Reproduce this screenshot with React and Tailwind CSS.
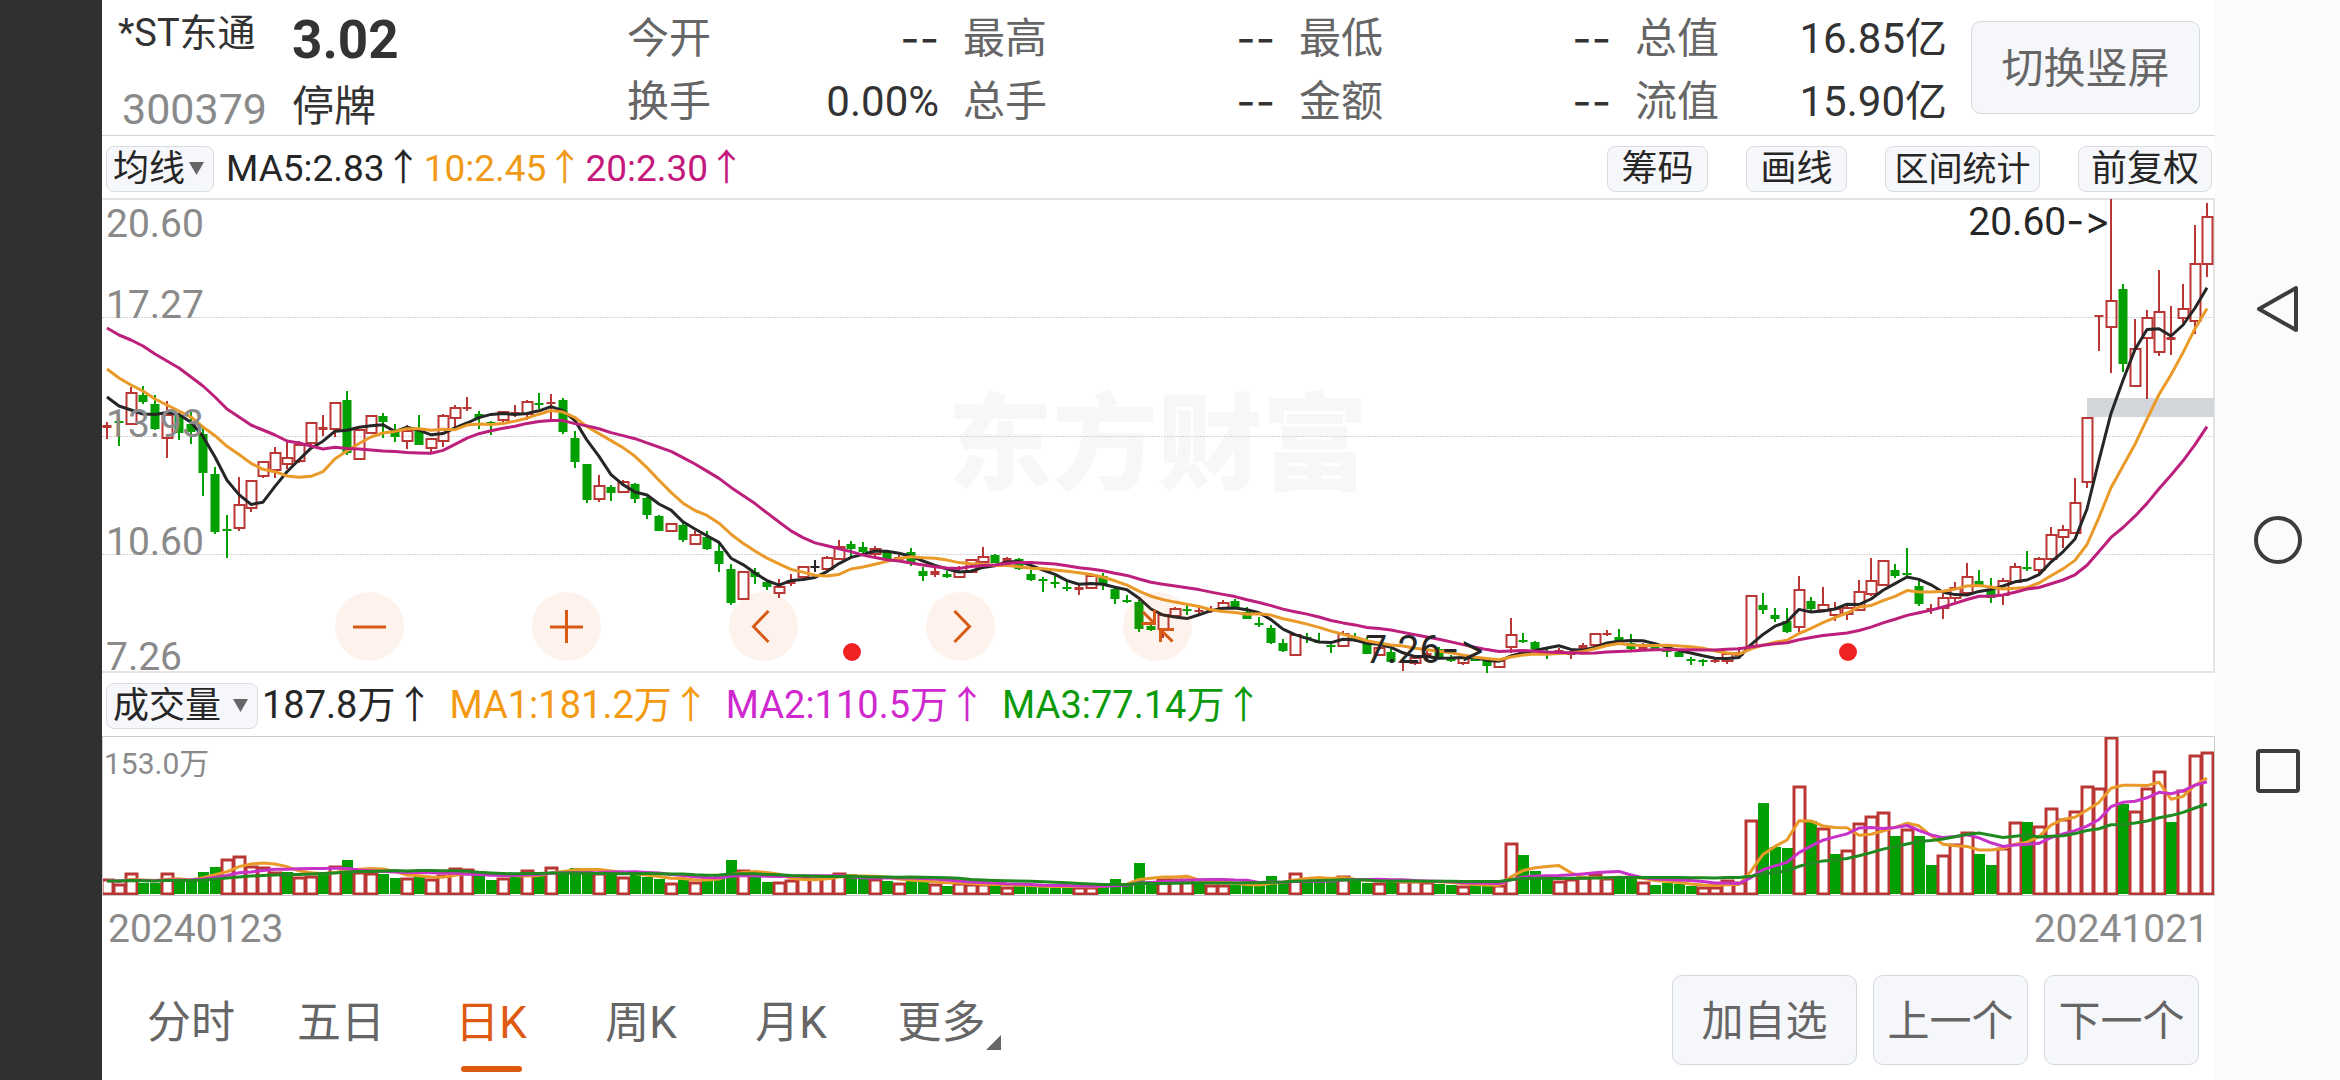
import { useState } from 'react'

const STEP = 12
const FIRST_X = 107

// colour, high, body top, body bottom, low (chart units)
const CANDLES = `
r 422 425 428 439|g 417 421 423 446|r 387 393 424 425|g 386 395 402 404|g 395 404 429 430|r 401 415 438 458
g 413 415 433 440|g 412 424 432 444|g 427 434 473 496|g 467 474 532 534|g 515 529 531 558|r 477 505 528 531
r 481 481 508 512|r 462 462 476 478|r 447 453 470 478|r 441 458 464 469|r 441 445 461 463|r 423 423 443 445
r 415 427 430 436|r 403 403 429 437|g 391 400 453 455|r 430 430 459 460|r 416 416 433 434|g 413 416 422 438
g 424 431 437 442|r 425 431 441 449|g 415 428 445 445|r 438 439 448 452|r 414 416 441 447|r 405 408 418 427
r 397 407 409 411|g 411 414 418 429|g 421 422 423 435|r 412 412 420 424|r 405 412 414 417|r 400 402 414 420
g 393 403 405 409|r 394 402 404 419|g 398 400 432 434|g 431 438 462 468|g 464 464 500 503|r 475 486 499 502
g 485 487 493 501|r 480 482 492 493|g 483 484 499 503|g 497 498 515 519|g 515 516 531 531|r 523 524 531 532
g 523 525 540 542|r 531 535 544 545|g 531 537 549 550|g 543 551 564 572|g 564 569 603 605|r 572 572 599 600
g 568 572 577 584|g 580 582 587 590|r 579 587 593 598|r 574 580 584 586|r 567 567 577 579|k 560 566 567 572
r 556 558 569 571|r 540 547 559 560|g 541 544 549 558|g 542 547 552 553|r 546 549 554 557|g 552 552 559 559
r 555 557 560 561|g 548 552 564 566|g 567 571 576 581|r 567 571 575 577|g 571 574 577 578|r 566 572 577 578
r 560 560 572 573|r 547 557 562 563|g 554 555 563 563|r 557 558 562 563|g 558 559 569 570|g 570 574 580 581
g 577 579 581 592|g 576 582 584 588|g 581 587 589 591|r 585 587 590 595|r 575 576 588 589|g 573 576 585 590
g 588 589 599 604|g 595 600 602 603|g 600 602 629 632|g 623 626 630 631|r 615 615 629 638|r 607 609 616 617
g 605 609 610 615|r 607 610 612 615|r 606 609 611 613|r 600 603 608 609|g 599 601 608 609|g 607 612 619 619
g 617 623 625 627|g 625 628 643 644|g 639 643 651 652|r 635 635 655 656|g 633 637 638 643|g 633 641 643 643
g 642 645 646 653|r 631 634 646 647|g 633 637 639 642|g 637 641 654 654|r 645 648 655 656|g 649 652 662 663
r 658 661 663 671|r 655 658 663 665|r 650 653 657 659|g 647 649 657 658|g 655 657 661 662|r 655 658 663 665
g 657 659 660 661|g 659 661 666 673|r 659 661 667 668|r 618 635 647 653|g 633 640 641 643|g 641 642 649 651
g 648 652 654 659|r 648 650 652 654|r 650 653 655 659|r 643 645 649 651|r 633 634 645 647|r 630 633 635 636
g 629 637 641 643|g 634 643 649 650|r 643 647 648 650|g 645 647 648 649|g 647 650 652 657|g 651 652 657 657
g 657 659 661 665|g 659 660 661 666|r 657 660 661 663|r 652 654 661 664|r 647 652 656 658|r 595 596 646 650
g 593 605 610 614|g 608 615 619 622|g 608 621 632 633|r 576 590 627 632|g 597 601 609 613|r 587 605 610 612
r 602 609 615 621|r 604 608 614 620|r 580 592 610 611|r 558 581 594 596|r 561 561 585 585|g 564 570 576 578
g 548 573 575 577|g 581 586 604 606|r 604 608 610 614|r 594 598 608 619|r 582 588 598 602|r 563 577 593 594
g 570 581 586 587|g 578 590 598 603|r 578 581 595 605|r 563 567 582 583|g 551 567 568 571|r 557 559 570 574
r 527 535 559 560|r 525 530 537 548|r 478 503 533 533|r 417 418 482 488|r 315 315 316 351|r 199 301 327 373
g 284 289 364 372|r 319 349 386 387|r 310 318 338 399|r 270 312 352 356|r 306 337 340 355|r 284 309 318 323
r 225 264 321 334|r 203 217 264 277`
  .trim()
  .split(/[|\n]/)
  .map((row, i) => {
    const [color, ...v] = row.split(' ')
    const [high, top, bottom, low] = v.map(Number)
    return { x: FIRST_X + i * STEP, color, high, top, bottom, low }
  })

// top of each volume bar, r = up day, g = down day
const VOLUMES = `
r879 r884 r873 g883 g883 r873 g882 g879 g872 g867 r859 r856 r866 r867 r872 g872 r877 r876 g872 r866
g860 r872 r873 g874 g878 r878 g876 r879 r875 r868 r869 g875 g880 r878 g877 r870 g873 r867 g871 g868
g869 r873 g874 r877 g875 g877 g879 r883 g879 r882 g877 g874 g860 r870 g877 g882 r882 r880 r877 r878
r877 r873 g874 g878 r879 g881 r883 g880 g881 r884 g886 r883 r884 r884 g885 r887 g886 g886 g887 g887
g886 r887 r887 g885 g879 g883 g863 g881 r879 r879 r879 g882 r885 r885 g885 g885 g885 g876 g881 r873
g878 g880 g881 r876 g881 g883 r883 g881 r881 r881 r882 g884 g885 r886 g885 g885 r885 r843 g855 g871
g878 r881 r879 r877 r874 r878 g878 g879 r882 g885 g883 g884 g886 r887 r887 r880 r882 r820 g803 g847
g848 r786 g821 r828 g854 r850 r823 r816 r812 g836 r829 g836 g865 r855 r844 r832 g854 g865 r848 r822
g822 r826 r808 r819 r811 r786 r788 r737 g804 r811 r788 r771 g822 r790 r755 r752`
  .trim()
  .split(/\s+/)
  .map((s, i) => ({ x: FIRST_X + i * STEP, color: s[0], top: Number(s.slice(1)) }))

const INK = { r: '#b93634', g: '#02a002', k: '#262626' }

// closes before the first visible day are not loaded, so each average starts from known points
function average(values, size, head) {
  return values.map((_, i) => {
    if (i < head.length) return head[i]
    const part = values.slice(Math.max(0, i - size + 1), i + 1)
    return part.reduce((a, b) => a + b, 0) / part.length
  })
}

const toPoints = (ys) => ys.map((y, i) => `${FIRST_X + i * STEP},${y.toFixed(1)}`).join(' ')

const CLOSES = CANDLES.map((c) => (c.color === 'g' ? c.bottom : c.top))
const PRICE_LINES = [
  { color: '#262626', points: toPoints(average(CLOSES, 5, [397, 406, 410, 414])) },
  { color: '#ea9a28', points: toPoints(average(CLOSES, 10, [369, 378, 385, 391, 399, 405, 411, 417, 427])) },
  {
    color: '#bd1f7c',
    points: toPoints(
      average(CLOSES, 20, [328, 335, 340, 346, 354, 361, 368, 377, 386, 397, 409, 417, 425, 430, 435, 441, 443, 446, 449])
    ),
  },
]

const TOPS = VOLUMES.map((v) => v.top)
const volumeAverage = (size) => toPoints(average([...Array(20).fill(881), ...TOPS], size, []).slice(20))
const VOLUME_LINES = [
  { color: '#ea9a28', points: volumeAverage(5) },
  { color: '#c832c8', points: volumeAverage(10) },
  { color: '#1f8a1f', points: volumeAverage(20) },
]

const STATS = [
  ['今开', '--', '换手', '0.00%'],
  ['最高', '--', '总手', '--'],
  ['最低', '--', '金额', '--'],
  ['总值', '16.85亿', '流值', '15.90亿'],
]

const TABS = ['分时', '五日', '日K', '周K', '月K']

function Stat({ label, value }) {
  return (
    <div className="flex justify-between text-[42px] leading-[63px]">
      <dt className="text-[#666666]">{label}</dt>
      <dd className={value === '--' ? "font-['Inter'] text-[#333333]" : 'text-[#333333]'}>{value}</dd>
    </div>
  )
}

function Header() {
  return (
    <header className="flex h-[136px] border-b border-[#d4d4d4] pl-4 pr-[15px]">
      <div className="w-[174px] shrink-0 whitespace-nowrap">
        <h1 className="text-[38px] leading-[66px]">*ST东通</h1>
        <p className="pl-1 text-[43px] leading-[86px] text-[#8a8a8a]">300379</p>
      </div>
      <div className="w-[335px] shrink-0">
        <p className="text-[53px] font-bold leading-[80px]">3.02</p>
        <p className="text-[42px] leading-[54px]">停牌</p>
      </div>
      <dl className="grid flex-1 grid-cols-4 gap-x-6 pt-[7px]">
        {STATS.map(([a, av, b, bv]) => (
          <div key={a}>
            <Stat label={a} value={av} />
            <Stat label={b} value={bv} />
          </div>
        ))}
      </dl>
      <button className="ml-6 mt-[21px] h-[93px] w-[229px] shrink-0 rounded-[10px] border border-[#d3d8dc] bg-[#f6f7fa] pt-0.5 text-[42px] text-[#666666]">
        切换竖屏
      </button>
    </header>
  )
}

function Picker({ label, options, className }) {
  return (
    <div className={`relative shrink-0 ${className}`}>
      <select
        aria-label={label}
        className="h-[46px] w-full appearance-none rounded-lg border border-[#d9dde0] bg-[#f6f7fa] pl-1.5 text-[36px] leading-[44px] text-[#262626]"
      >
        {options.map((o) => (
          <option key={o}>{o}</option>
        ))}
      </select>
      <svg className="pointer-events-none absolute right-2.5 top-4 h-[13px] w-[15px]" viewBox="0 0 15 13">
        <path d="M0 0H15L7.5 13Z" fill="#666666" />
      </svg>
    </div>
  )
}

function ToolButton({ children, className }) {
  return (
    <button
      className={`h-[46px] shrink-0 whitespace-nowrap rounded-lg border border-[#d9dde0] bg-[#f6f7fa] leading-[44px] text-[#262626] ${className}`}
    >
      {children}
    </button>
  )
}

function PriceToolbar() {
  return (
    <div className="flex h-[62px] items-center pl-1 pr-[3px] pt-1">
      <Picker label="主图指标" options={['均线', 'BOLL']} className="w-[108px]" />
      <div className="ml-3 flex gap-0.5 whitespace-nowrap text-[37px]">
        <span className="text-[#262626]">MA5:2.83↑</span>
        <span className="text-[#f09a1a]">10:2.45↑</span>
        <span className="text-[#c4187c]">20:2.30↑</span>
      </div>
      <div className="ml-auto flex gap-[38px]">
        <ToolButton className="w-[101px] text-[36px]">筹码</ToolButton>
        <ToolButton className="w-[101px] text-[36px]">画线</ToolButton>
        <ToolButton className="w-[155px] text-[34px]">区间统计</ToolButton>
        <ToolButton className="w-[134px] text-[36px]">前复权</ToolButton>
      </div>
    </div>
  )
}

const CONTROLS = [
  { label: '缩小', d: 'M18 35H51', w: 3 },
  { label: '放大', d: 'M18 35H51M34.5 18V51', w: 3 },
  { label: '左移', d: 'M39.5 19L24.5 34.5L39.5 50', w: 3 },
  { label: '右移', d: 'M28.5 19L43.5 34.5L28.5 50', w: 3 },
  { label: '收起', d: 'M18.5 31.5H31.5V18M31.5 31.5L20 20M37.5 50V37.5H51M37.5 37.5L49.5 49.5', w: 3 },
]

function Candle({ x, color, high, top, bottom, low }) {
  const ink = INK[color]
  const height = Math.max(bottom - top, 2)
  return (
    <g stroke={ink} strokeWidth="2">
      <path d={`M${x} ${high}V${top}M${x} ${bottom}V${low}`} />
      {color === 'r' && height > 4 ? (
        <rect x={x - 4.5} y={top} width="10" height={height} fill="none" />
      ) : (
        <rect x={x - 4.5} y={top} width="9" height={height} fill={ink} stroke="none" />
      )}
    </g>
  )
}

function PriceChart() {
  return (
    <section className="relative h-[475px] border-2 border-l-0 border-[#e4e4e4]">
      <div className="absolute inset-0 flex items-center justify-center font-['Noto_Sans_CJK_SC'] text-[105px] font-black leading-none text-[#f7f7f7]">
        东方财富
      </div>
      <svg className="absolute inset-0 h-full w-full overflow-visible" viewBox="102 200 2111 471" preserveAspectRatio="none">
        <path d="M102 317.5H2213M102 436.5H2213M102 554.5H2213" stroke="#d4d4d4" strokeDasharray="2 1" />
        <rect x="2087" y="398" width="127" height="19" fill="#d3d6da" />
        {CANDLES.map((c) => (
          <Candle key={c.x} {...c} />
        ))}
        {PRICE_LINES.map((l) => (
          <polyline key={l.color} points={l.points} fill="none" stroke={l.color} strokeWidth="3" strokeLinejoin="round" />
        ))}
        <circle cx="852" cy="652" r="9" fill="#f02222" />
        <circle cx="1848" cy="652" r="9" fill="#f02222" />
      </svg>
      <div className="absolute left-1 top-px text-[39px] leading-[46px] text-[#8a8a8a]">
        <p className="absolute top-0">20.60</p>
        <p className="absolute top-[81px]">17.27</p>
        <p className="absolute top-[200px]">13.93</p>
        <p className="absolute top-[318px]">10.60</p>
        <p className="absolute top-[433px]">7.26</p>
      </div>
      <p className="absolute right-[103px] top-0 whitespace-nowrap text-[39px] leading-[42px] text-[#262626]">
        20.60<span className="font-['Inter'] [font-variant-ligatures:none]">-&gt;</span>
      </p>
      <p className="absolute right-[728px] top-[428px] whitespace-nowrap text-[39px] leading-[42px] text-[#262626]">
        7.26<span className="font-['Inter'] [font-variant-ligatures:none]">-&gt;</span>
      </p>
      <div className="absolute bottom-[10px] left-[233px] flex gap-32">
        {CONTROLS.map((c) => (
          <button key={c.label} aria-label={c.label} className="size-[69px] rounded-full bg-[#e8590c]/8">
            <svg viewBox="0 0 69 69" fill="none" stroke="#d65a14" strokeWidth={c.w}>
              <path d={c.d} />
            </svg>
          </button>
        ))}
      </div>
    </section>
  )
}

function VolumeToolbar() {
  return (
    <div className="flex h-[63px] items-center pl-1 pt-0.5">
      <Picker label="副图指标" options={['成交量', 'MACD']} className="w-[152px]" />
      <div className="ml-1 flex gap-4 whitespace-nowrap text-[38px]">
        <span className="text-[#262626]">187.8万↑</span>
        <span className="text-[#f39a12]">MA1:181.2万↑</span>
        <span className="text-[#cf28cf]">MA2:110.5万↑</span>
        <span className="text-[#0a9a0a]">MA3:77.14万↑</span>
      </div>
    </div>
  )
}

function VolumeChart() {
  return (
    <section className="relative h-[160px] border border-[#cccccc]">
      <svg className="absolute inset-0 h-full w-full" viewBox="103 737 2111 158" preserveAspectRatio="none">
        {VOLUMES.map((v) =>
          v.color === 'r' ? (
            <rect key={v.x} x={v.x - 5} y={v.top + 1} width="11" height={893 - v.top} fill="#ffffff" stroke={INK.r} strokeWidth="3" />
          ) : (
            <rect key={v.x} x={v.x - 5} y={v.top} width="11" height={894 - v.top} fill={INK.g} />
          )
        )}
        {VOLUME_LINES.map((l) => (
          <polyline key={l.color} points={l.points} fill="none" stroke={l.color} strokeWidth="3" strokeLinejoin="round" />
        ))}
      </svg>
      <p className="absolute left-px top-1 text-[30px] leading-[45px] text-[#8a8a8a]">153.0万</p>
    </section>
  )
}

function BottomBar() {
  const [active, setActive] = useState('日K')
  return (
    <footer className="flex flex-1 items-start pl-3.5 pr-4 text-[#666666]">
      <nav className="flex items-start text-[44px] leading-[85px]">
        {TABS.map((t) => (
          <button
            key={t}
            onClick={() => setActive(t)}
            className={`flex w-[150px] flex-col items-center pt-1.5 ${t === active ? 'text-[#de5a10]' : ''}`}
          >
            <span>{t}</span>
            {t === active && <span className="h-1.5 w-[61px] rounded-full bg-[#de5a10]" />}
          </button>
        ))}
        <button className="flex w-[150px] items-start justify-center pl-4 pt-1.5">
          <span>更多</span>
          <svg className="mt-[54px] size-[15px]" viewBox="0 0 15 15">
            <path d="M15 0V15H0Z" fill="#666666" />
          </svg>
        </button>
      </nav>
      <div className="ml-auto flex gap-4 text-[42px]">
        <button className="h-[90px] w-[185px] rounded-[10px] border border-[#d3d8dc] bg-[#f6f7fa] pt-0.5">加自选</button>
        <button className="h-[90px] w-[155px] rounded-[10px] border border-[#d3d8dc] bg-[#f6f7fa] pt-0.5">上一个</button>
        <button className="h-[90px] w-[155px] rounded-[10px] border border-[#d3d8dc] bg-[#f6f7fa] pt-0.5">下一个</button>
      </div>
    </footer>
  )
}

function SystemNav() {
  return (
    <nav className="flex w-[125px] shrink-0 flex-col items-center justify-center gap-[183px] bg-[#fbfbfb]">
      <button aria-label="返回" className="size-12">
        <svg viewBox="0 0 48 48" fill="none" stroke="#3c3c3c" strokeWidth="4" strokeLinejoin="round">
          <path d="M5 24L42 3V45Z" />
        </svg>
      </button>
      <button aria-label="主页" className="size-12">
        <svg viewBox="0 0 48 48" fill="none" stroke="#3c3c3c" strokeWidth="4">
          <circle cx="24" cy="24" r="22" />
        </svg>
      </button>
      <button aria-label="最近任务" className="size-12">
        <svg viewBox="0 0 48 48" fill="none" stroke="#3c3c3c" strokeWidth="4" strokeLinejoin="round">
          <rect x="4" y="4" width="40" height="40" rx="2" />
        </svg>
      </button>
    </nav>
  )
}

export default function App() {
  return (
    <div className="flex min-h-screen bg-white font-['Roboto','Noto_Sans_CJK_SC',sans-serif] text-[#333333]">
      <div className="w-[102px] shrink-0 bg-[#303030]" />
      <main className="flex min-w-0 flex-1 flex-col">
        <Header />
        <PriceToolbar />
        <PriceChart />
        <VolumeToolbar />
        <VolumeChart />
        <div className="flex h-[79px] justify-between px-1.5 text-[39px] leading-[66px] text-[#8a8a8a]">
          <time dateTime="2024-01-23">20240123</time>
          <time dateTime="2024-10-21">20241021</time>
        </div>
        <BottomBar />
      </main>
      <SystemNav />
    </div>
  )
}
